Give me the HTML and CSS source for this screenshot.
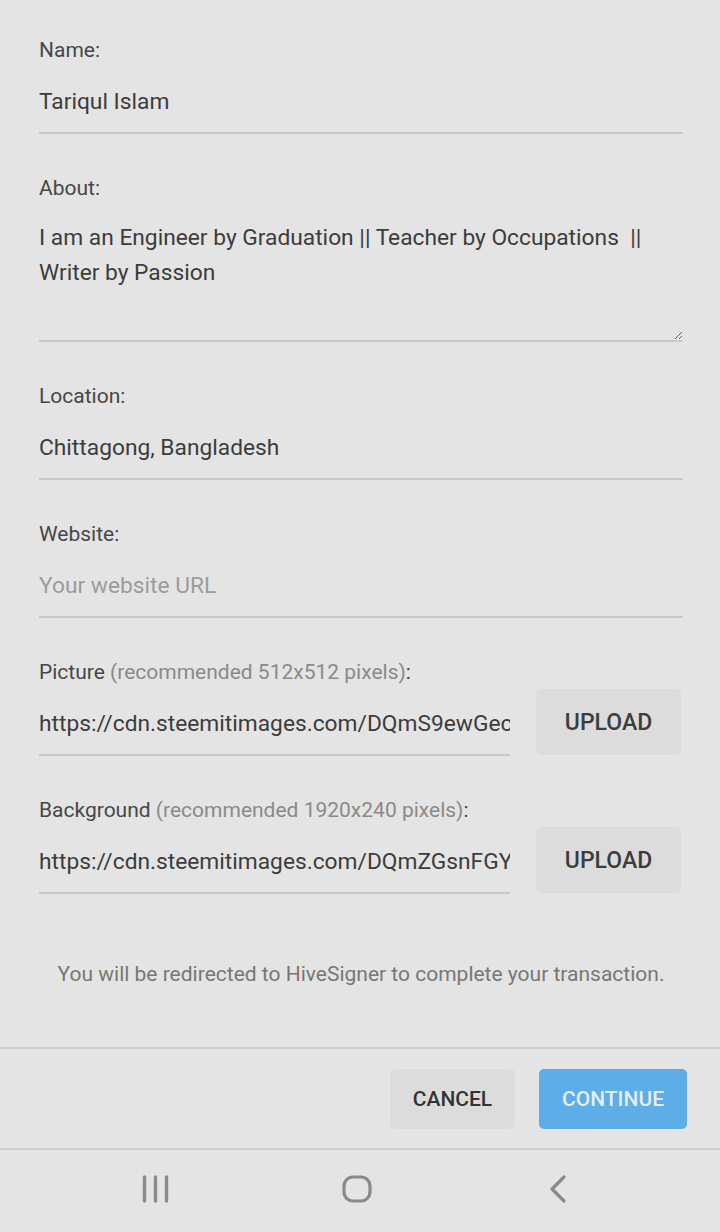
FILE: index.html
```html
<!DOCTYPE html>
<html lang="en">
  <head>
    <title>Edit profile</title>
    <meta charset="UTF-8" />
    <meta name="viewport" content="width=device-width, initial-scale=1.0" />
    <link rel="stylesheet" href="styles.css">
  </head>

  <body>
    <form class="profile-form">
      <div class="field">
        <label class="field-label" for="name">Name:</label>
        <input class="field-input" id="name" type="text" value="Tariqul Islam" />
      </div>

      <div class="field">
        <label class="field-label" for="about">About:</label>
        <textarea class="field-input field-textarea" id="about" rows="3">I am an Engineer by Graduation || Teacher by Occupations  || Writer by Passion </textarea>
      </div>

      <div class="field">
        <label class="field-label" for="location">Location:</label>
        <input class="field-input" id="location" type="text" value="Chittagong, Bangladesh" />
      </div>

      <div class="field">
        <label class="field-label" for="website">Website:</label>
        <input class="field-input" id="website" type="text" placeholder="Your website URL" />
      </div>

      <div class="field">
        <label class="field-label" for="picture">Picture <span class="hint">(recommended 512x512 pixels)</span>:</label>
        <div class="upload-row">
          <input class="field-input" id="picture" type="text" value="https://cdn.steemitimages.com/DQmS9ewGecVgXq7sHjZ1" />
          <button class="btn-upload" type="button">UPLOAD</button>
        </div>
      </div>

      <div class="field">
        <label class="field-label" for="cover">Background <span class="hint">(recommended 1920x240 pixels)</span>:</label>
        <div class="upload-row">
          <input class="field-input" id="cover" type="text" value="https://cdn.steemitimages.com/DQmZGsnFGYwB8kT3pLa2" />
          <button class="btn-upload" type="button">UPLOAD</button>
        </div>
      </div>

      <p class="notice">You will be redirected to HiveSigner to complete your transaction.</p>
    </form>

    <div class="dialog-actions">
      <button class="btn-cancel" type="button">CANCEL</button>
      <button class="btn-continue" type="button">CONTINUE</button>
    </div>

    <nav class="nav-bar">
      <svg class="nav-icon" width="30" height="30" viewBox="0 0 30 30">
        <g stroke="#8a8a8a" stroke-width="3.4" stroke-linecap="round">
          <line x1="3.5" y1="3" x2="3.5" y2="27" />
          <line x1="14.5" y1="3" x2="14.5" y2="27" />
          <line x1="25.5" y1="3" x2="25.5" y2="27" />
        </g>
      </svg>
      <svg class="nav-icon" width="30" height="30" viewBox="0 0 30 30">
        <rect x="2" y="3" width="26" height="24" rx="9" fill="none" stroke="#8a8a8a" stroke-width="3.2" />
      </svg>
      <svg class="nav-icon" width="30" height="30" viewBox="0 0 30 30">
        <polyline points="21,3 9,15 21,27" fill="none" stroke="#8a8a8a" stroke-width="3.2" stroke-linecap="round" stroke-linejoin="round" />
      </svg>
    </nav>
  </body>
</html>
```

FILE: styles.css
```css
body {
  font-family: Roboto, "Noto Sans", sans-serif;
  background-color: #e4e4e4;
  color: #3c3c3c;
  margin: 0;
}

.profile-form {
  padding: 38px 37px 0 39px;
}

.field {
  margin-bottom: 42px;
}

.field-label {
  display: block;
  font-size: 21px;
  line-height: 24px;
  color: #474747;
}

.hint {
  color: #8a8a8a;
}

.field-input {
  display: block;
  width: 100%;
  box-sizing: content-box;
  height: 30px;
  padding: 25px 0 15px;
  margin: 0;
  border: none;
  border-bottom: 2px solid #c9c9c9;
  border-radius: 0;
  background: transparent;
  font-family: inherit;
  font-size: 22.75px;
  line-height: 30px;
  color: #3c3c3c;
  outline: none;
}

.field-input::placeholder {
  color: #9c9c9c;
}

.field-textarea {
  height: 105px;
  padding: 20px 0 15px;
  line-height: 35px;
  resize: vertical;
}

.upload-row {
  display: flex;
  align-items: flex-end;
  gap: 26px;
}

.upload-row .field-input {
  width: auto;
  flex: 1;
  min-width: 0;
}

.btn-upload {
  flex: none;
  width: 145px;
  height: 66px;
  margin-right: 2px;
  margin-bottom: 1px;
  border: none;
  border-radius: 5px;
  background-color: #dcdcdc;
  color: #3d3d3d;
  font-family: inherit;
  font-size: 23px;
  font-weight: 500;
  cursor: pointer;
}

.notice {
  margin: 0;
  padding: 26px 0 61px;
  text-align: center;
  font-size: 21px;
  line-height: 24px;
  color: #777;
}

.dialog-actions {
  display: flex;
  justify-content: flex-end;
  gap: 24px;
  padding: 20px 33px 19px 0;
  border-top: 2px solid #cfcfcf;
  border-bottom: 2px solid #cfcfcf;
}

.btn-cancel,
.btn-continue {
  height: 60px;
  border: none;
  border-radius: 5px;
  font-family: inherit;
  font-size: 21px;
  font-weight: 500;
  cursor: pointer;
}

.btn-cancel {
  width: 125px;
  background-color: #dcdcdc;
  color: #333;
}

.btn-continue {
  width: 148px;
  background-color: #5daee8;
  color: #e4eef7;
}

.nav-bar {
  display: flex;
  justify-content: space-between;
  align-items: center;
  height: 77px;
  padding: 0 147px 4px 141px;
}

.nav-icon {
  display: block;
}
```
